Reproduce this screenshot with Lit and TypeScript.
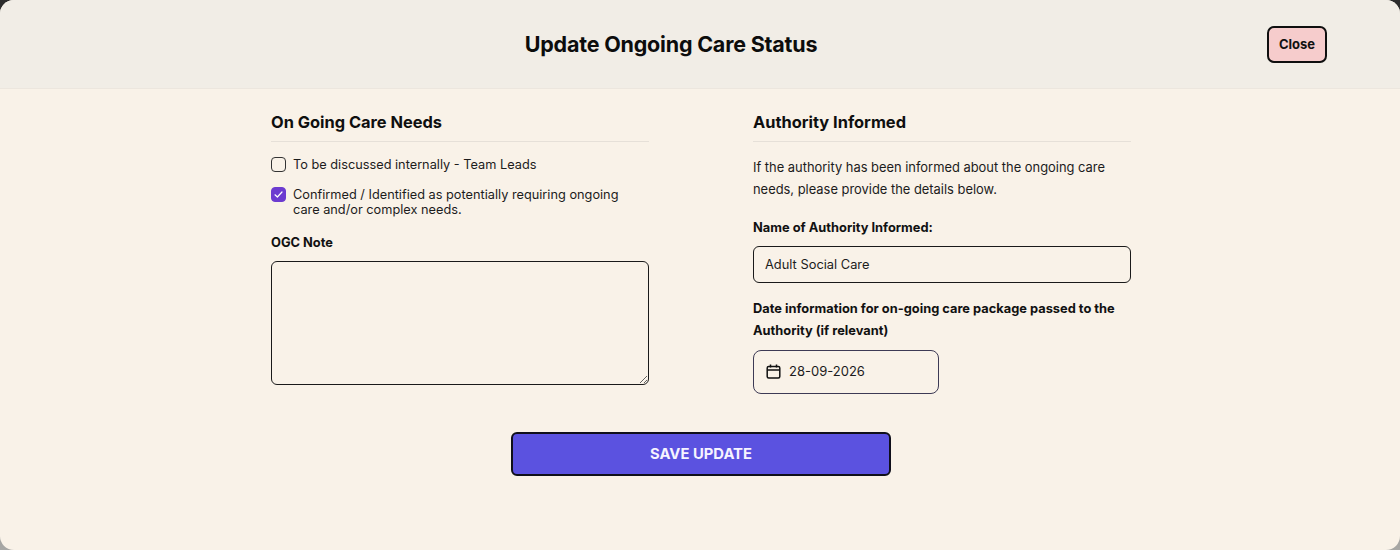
import { LitElement, html, css } from "lit";
import { customElement } from "lit/decorators.js";

@customElement("app-root")
export class AppRoot extends LitElement {
  static styles = css`
    :host {
      display: block;
      width: 1400px;
      height: 550px;
      background: linear-gradient(180deg, #2c2c2c 0%, #2c2c2c 40%, #a8a8a6 100%);
      font-family: Inter, "Liberation Sans", sans-serif;
      color: #111;
    }
    .modal {
      height: 550px;
      box-sizing: border-box;
      background: #f9f2e8;
      border-radius: 14px;
      overflow: hidden;
      display: flex;
      flex-direction: column;
    }
    .header {
      height: 89px;
      box-sizing: border-box;
      flex: none;
      background: #f1ede6;
      border-bottom: 1px solid #ece6de;
      display: flex;
      align-items: center;
      padding: 0 73px 0 75px;
    }
    h1 {
      flex: 1;
      margin: 0;
      text-align: center;
      font-size: 21.5px;
      line-height: 28px;
      font-weight: 700;
      letter-spacing: -0.2px;
      color: #0c0c0c;
    }
    .close {
      width: 60px;
      height: 37px;
      box-sizing: border-box;
      background: #f6cccc;
      border: 2px solid #0f0f0f;
      border-radius: 7px;
      font: 700 13px Inter, sans-serif;
      color: #111;
      padding: 0;
    }
    .body {
      padding-left: 2px;
    }
    .columns {
      width: 860px;
      margin: 0 auto;
      padding-top: 22px;
      display: grid;
      grid-template-columns: 378px 378px;
      column-gap: 104px;
    }
    h2 {
      margin: 0;
      font-size: 16.4px;
      line-height: 22px;
      font-weight: 700;
      padding-bottom: 8px;
      border-bottom: 1px solid #e6e0d8;
      color: #0f0f0f;
    }
    .check {
      display: flex;
      align-items: flex-start;
      gap: 7px;
      padding-right: 20px;
      font-size: 12.75px;
      line-height: 15px;
      color: #1c1c1c;
    }
    .check.first { margin-top: 15px; }
    .check.second { margin-top: 15px; }
    .box {
      width: 15px;
      height: 15px;
      flex: none;
      box-sizing: border-box;
      border: 1.5px solid #333;
      border-radius: 4px;
      display: flex;
      align-items: center;
      justify-content: center;
    }
    .box.on {
      background: #6c3bd0;
      border-color: #6c3bd0;
    }
    .box svg { display: block; }
    .label {
      font-size: 12.85px;
      font-weight: 700;
      line-height: 22px;
      color: #111;
    }
    .note-label { margin-top: 15px; }
    textarea {
      display: block;
      margin-top: 7px;
      width: 378px;
      height: 124px;
      box-sizing: border-box;
      background: transparent;
      border: 1.25px solid #1a1a1a;
      border-radius: 6px;
    }
    .intro {
      margin: 15px 0 0;
      font-size: 12.9px;
      line-height: 22px;
      color: #1c1c1c;
    }
    .auth-label { margin-top: 16px; }
    .field {
      margin-top: 7px;
      height: 37px;
      box-sizing: border-box;
      border: 1.25px solid #1a1a1a;
      border-radius: 6px;
      padding: 0 11px 1px;
      display: flex;
      align-items: center;
      font-size: 12.85px;
      color: #1c1c1c;
    }
    .date-label { margin-top: 15px; }
    .date {
      margin-top: 8px;
      width: 186px;
      height: 44px;
      box-sizing: border-box;
      border: 1px solid #3d3a55;
      border-radius: 8px;
      padding: 0 12px 2px;
      display: flex;
      align-items: center;
      gap: 8px;
      font-size: 13px;
      color: #1c1c1c;
    }
    .date svg { display: block; flex: none; }
    .actions {
      display: flex;
      justify-content: center;
      margin-top: 38px;
    }
    .save {
      width: 380px;
      height: 44px;
      box-sizing: border-box;
      background: #5b52e0;
      border: 2px solid #0f0f1a;
      border-radius: 6px;
      color: #f6f4ff;
      font: 700 14.8px Inter, sans-serif;
      padding: 0;
    }
  `;

  render() {
    return html`
      <div class="modal">
        <div class="header">
          <h1>Update Ongoing Care Status</h1>
          <button class="close">Close</button>
        </div>
        <div class="body">
          <div class="columns">
            <section>
              <h2>On Going Care Needs</h2>
              <div class="check first">
                <span class="box"></span>
                <span>To be discussed internally - Team Leads</span>
              </div>
              <div class="check second">
                <span class="box on">
                  <svg width="11" height="11" viewBox="0 0 11 11" fill="none" stroke="#fff" stroke-width="1.2" stroke-linecap="round" stroke-linejoin="round"><path d="M2 5.8 4.4 8 9 3"/></svg>
                </span>
                <span>Confirmed / Identified as potentially requiring ongoing care and/or complex needs.</span>
              </div>
              <div class="label note-label">OGC Note</div>
              <textarea></textarea>
            </section>
            <section>
              <h2>Authority Informed</h2>
              <p class="intro">If the authority has been informed about the ongoing care needs, please provide the details below.</p>
              <div class="label auth-label">Name of Authority Informed:</div>
              <div class="field">Adult Social Care</div>
              <div class="label date-label">Date information for on-going care package passed to the Authority (if relevant)</div>
              <div class="date">
                <svg width="15" height="15" viewBox="0 0 15 15" fill="none" stroke="#111" stroke-width="1.5"><rect x="1.2" y="2.5" width="12.6" height="11.5" rx="1.5"/><path d="M1.2 6h12.6M4.5 .5v3M10.5 .5v3"/></svg>
                <span>28-09-2026</span>
              </div>
            </section>
          </div>
          <div class="actions"><button class="save">SAVE UPDATE</button></div>
        </div>
      </div>
    `;
  }
}
